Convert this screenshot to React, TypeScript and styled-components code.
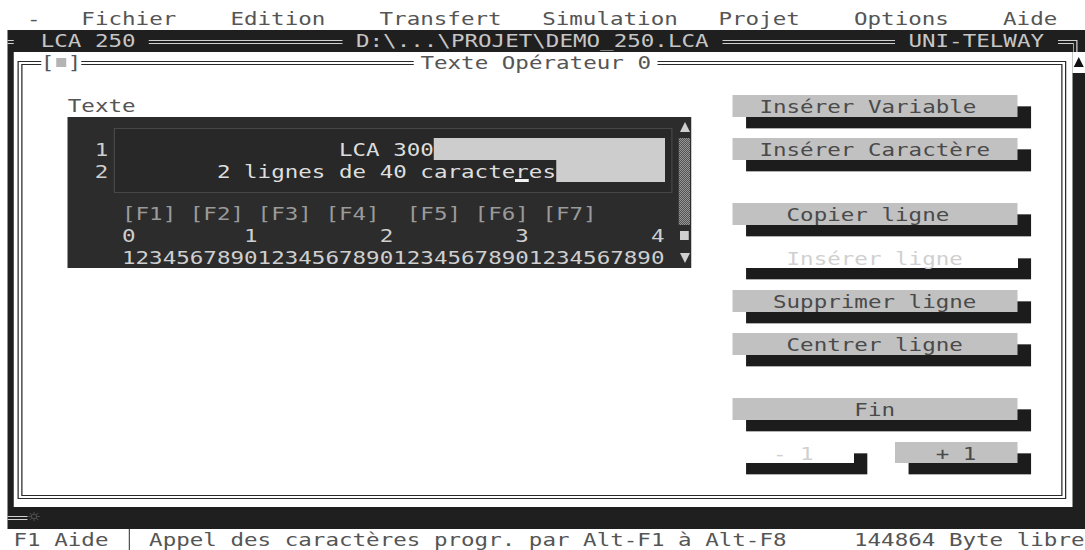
import React from "react";
import styled, { createGlobalStyle } from "styled-components";

// The screen is an 80x25 text grid. Cells are laid out unstretched
// (10.85px wide) and the whole screen is stretched 1.25x horizontally,
// which gives the wide EGA look of the font.
const SX = 1.25;
const C = 10.85; // column width before stretch
const R = 21.68; // row height
const px = (n: number) => `${n / SX}px`; // screen pixels -> unstretched

const INK = "#555";
const FRAME = "#1f1f1f";
const LIGHT = "#c6c6c6";
const RULE = "#d0d0d0";
const FACE = "#c1c1c1";
const EDIT_BG = "#2c2c2c";

const GlobalStyle = createGlobalStyle`
  html, body { margin: 0; padding: 0; background: #fff; overflow: hidden; }
  body { width: 1085px; height: 550px; }
`;

const Screen = styled.div`
  width: ${80 * C}px;
  height: 550px;
  box-sizing: border-box;
  padding-top: 8.3px;
  transform: scaleX(${SX});
  transform-origin: 0 0;
  font-family: "DejaVu Sans Mono", "Liberation Mono", monospace;
  font-size: 18px;
  line-height: ${R}px;
  letter-spacing: 0.013px;
  white-space: pre;
  color: ${INK};
  background: #fff;
`;

/* ---------- menu & status lines ---------- */

const MenuBar = styled.div`
  height: ${R}px;
  display: grid;
  grid-template-columns: repeat(80, ${C}px);
`;

const MenuItem = styled.span<{ $col: number }>`
  grid-column-start: ${(p) => p.$col + 1};
  grid-row: 1;
`;

const StatusBar = styled(MenuBar)``;

const StatusItem = styled(MenuItem)``;

const StatusSep = styled.span<{ $col: number }>`
  grid-column-start: ${(p) => p.$col + 1};
  grid-row: 1;
  justify-self: center;
  width: 0;
  height: ${R}px;
  border-left: 1px solid ${INK};
`;

/* ---------- application window ---------- */

const AppWindow = styled.div`
  margin-left: ${px(7)};
  background: ${FRAME};
  display: flex;
  flex-direction: column;
`;

const TitleBar = styled.div`
  height: ${R}px;
  display: flex;
  align-items: flex-start;
  color: ${LIGHT};
`;

const TitleRule = styled.div<{ $w?: number; $gap?: number; $grow?: boolean }>`
  margin-top: 10px;
  margin-left: ${(p) => px(p.$gap ?? 0)};
  height: 2px;
  border-top: 1px solid ${RULE};
  border-bottom: 1px solid ${RULE};
  ${(p) => (p.$grow ? "flex: 1;" : `width: ${px(p.$w ?? 0)}; flex: none;`)}
`;

const TitleLabel = styled.span<{ $gap: number }>`
  margin-left: ${(p) => px(p.$gap)};
`;

const TitleCorner = styled.div`
  margin: 10px ${px(7)} 0 ${px(14)};
  width: ${px(20)};
  align-self: stretch;
  box-sizing: border-box;
  border-top: 4px double ${RULE};
  border-right: 4px double ${RULE};
`;

const WindowBody = styled.div`
  height: ${21 * R}px;
  display: flex;
`;

const FrameEdge = styled.div`
  width: ${px(7)};
`;

const Client = styled.div`
  flex: 1;
  background: #fff;
  display: flex;
  flex-direction: column;
`;

const ScrollTrack = styled.div`
  width: ${px(13)};
  display: flex;
  flex-direction: column;
`;

const ScrollUp = styled.div`
  height: 21px;
  background: #fff;
  display: flex;
  align-items: center;
  justify-content: center;
`;

const UpArrow = styled.div<{ $color: string }>`
  width: 0;
  height: 0;
  border-left: ${px(5)} solid transparent;
  border-right: ${px(5)} solid transparent;
  border-bottom: 10px solid ${(p) => p.$color};
`;

const DownArrow = styled.div<{ $color: string }>`
  width: 0;
  height: 0;
  border-left: ${px(5)} solid transparent;
  border-right: ${px(5)} solid transparent;
  border-top: 10px solid ${(p) => p.$color};
`;

const FrameFoot = styled.div`
  height: ${R}px;
  display: flex;
  align-items: center;
`;

const FootRule = styled.div`
  width: ${px(20)};
  height: 2px;
  margin-top: 1px;
  border-top: 1px solid ${RULE};
  border-bottom: 1px solid ${RULE};
`;

const Grip = styled.svg`
  width: ${px(13)};
  height: 13px;
  margin-top: -3px;
`;

/* ---------- dialog ---------- */

const Dialog = styled.div`
  flex: 1;
  margin: 9.8px ${px(6)} 7.5px ${px(3)};
  border: 4px double #2a2a2a;
  display: flex;
  flex-direction: column;
`;

const DialogHead = styled.div`
  margin-top: -13.84px;
  height: ${R}px;
  display: flex;
`;

const CloseBox = styled.div`
  margin-left: ${px(18.7)};
  width: ${3 * C}px;
  background: #fff;
  display: flex;
  align-items: center;
`;

const CloseMark = styled.span`
  width: ${C}px;
  display: flex;
  justify-content: center;
  &::before {
    content: "";
    width: ${px(10)};
    height: 9px;
    background: #b4b4b4;
  }
`;

const DialogTitle = styled.div`
  margin-left: ${px(332.3)};
  padding: 0 ${C / 2}px;
  background: #fff;
`;

const DialogBody = styled.div`
  flex: 1;
  display: flex;
  padding-left: ${px(45.8)};
`;

const LeftPane = styled.div`
  width: ${46 * C}px;
  padding-top: ${R}px;
  display: flex;
  flex-direction: column;
`;

const FieldLabel = styled.div`
  height: ${R}px;
`;

/* text editor: cols 5-6 margin, 7 line numbers, 8 gap, 9-48 text, 49 gap, 50 scrollbar */
const Editor = styled.div`
  height: ${7 * R}px;
  background: ${EDIT_BG};
  display: grid;
  grid-template-columns: ${2 * C}px ${C}px ${C}px ${40 * C}px ${C}px ${C}px;
  grid-template-rows: repeat(7, ${R}px);
  color: #cfcfcf;
`;

const FieldBox = styled.div`
  grid-column: 3 / 6;
  grid-row: 1 / 5;
  margin: 11.3px ${px(5)} 10.4px ${px(5.5)};
  border: 1px solid #474747;
  background: #282828;
`;

const LineNo = styled.div<{ $row: number }>`
  grid-column: 2;
  grid-row: ${(p) => p.$row};
  padding-top: 1px;
`;

const TextLine = styled.div<{ $row: number }>`
  grid-column: 4;
  grid-row: ${(p) => p.$row};
  display: flex;
  color: #dedede;
  padding-top: 1px;
`;

const LineFill = styled.span`
  flex: 1;
  background: #cdcdcd;
  margin-top: -1px;
`;

const Cursor = styled.span`
  display: inline-block;
  height: ${R}px;
  background: linear-gradient(
    to top,
    transparent 1px,
    #f2f2f2 1px,
    #f2f2f2 4px,
    transparent 4px
  );
`;

const KeyRow = styled.div<{ $row: number; $dim?: boolean }>`
  grid-column: 4;
  grid-row: ${(p) => p.$row};
  color: ${(p) => (p.$dim ? "#9a9a9a" : "#cfcfcf")};
`;

const EditScroll = styled.div`
  grid-column: 6;
  grid-row: 1 / 8;
  display: flex;
  flex-direction: column;
`;

const ScrollCell = styled.div`
  height: ${R}px;
  display: flex;
  align-items: center;
  justify-content: center;
`;

const Hatch = styled.div`
  height: ${4 * R}px;
  margin: 0 ${px(1)};
  background-image: repeating-conic-gradient(#bdbdbd 0 25%, ${EDIT_BG} 0 50%);
  background-size: ${px(2)} 2px;
`;

const Thumb = styled.div`
  width: ${px(9)};
  height: 9px;
  background: #d0d0d0;
`;

/* ---------- buttons ---------- */

const RightPane = styled.div`
  margin-left: ${3 * C}px;
  width: ${22 * C}px;
  padding-top: ${R}px;
  display: flex;
  flex-direction: column;
`;

const ButtonRow = styled.div<{ $skip: number }>`
  margin-top: ${(p) => p.$skip * R}px;
  display: flex;
  gap: ${3 * C}px;
`;

const Button = styled.div<{ $w: number; $pad: number; $off?: boolean }>`
  width: ${(p) => p.$w * C}px;
  height: ${R}px;
  box-sizing: border-box;
  padding-left: ${(p) => p.$pad * C}px;
  padding-top: 1px;
  background: ${(p) => (p.$off ? "transparent" : FACE)};
  color: ${(p) => (p.$off ? "#d0d0d0" : "#4a4a4a")};
  box-shadow: ${C}px ${R / 2 + 0.5}px 0 0 #1c1c1c;
`;

const BUTTONS = [
  { label: "Insérer Variable", pad: 2, skip: 0 },
  { label: "Insérer Caractère", pad: 2, skip: 1 },
  { label: "Copier ligne", pad: 4, skip: 2 },
  { label: "Insérer ligne", pad: 4, skip: 1, off: true },
  { label: "Supprimer ligne", pad: 3, skip: 1 },
  { label: "Centrer ligne", pad: 4, skip: 1 },
  { label: "Fin", pad: 9, skip: 2 },
];

const FKEYS = "[F1] [F2] [F3] [F4]  [F5] [F6] [F7]";
const DECADES = "0        1         2         3         4";
const RULER = "1234567890".repeat(4);

export default function App() {
  return (
    <>
      <GlobalStyle />
      <Screen>
        <MenuBar>
          <MenuItem $col={2}>-</MenuItem>
          <MenuItem $col={6}>Fichier</MenuItem>
          <MenuItem $col={17}>Edition</MenuItem>
          <MenuItem $col={28}>Transfert</MenuItem>
          <MenuItem $col={40}>Simulation</MenuItem>
          <MenuItem $col={53}>Projet</MenuItem>
          <MenuItem $col={63}>Options</MenuItem>
          <MenuItem $col={74}>Aide</MenuItem>
        </MenuBar>

        <AppWindow>
          <TitleBar>
            <TitleRule $w={7} />
            <TitleLabel $gap={26.7}>LCA 250</TitleLabel>
            <TitleRule $gap={13.4} $w={194} />
            <TitleLabel $gap={13}>D:\...\PROJET\DEMO_250.LCA</TitleLabel>
            <TitleRule $gap={13.4} $grow />
            <TitleLabel $gap={13.7}>UNI-TELWAY</TitleLabel>
            <TitleCorner />
          </TitleBar>

          <WindowBody>
            <FrameEdge />
            <Client>
              <Dialog>
                <DialogHead>
                  <CloseBox>
                    [<CloseMark />]
                  </CloseBox>
                  <DialogTitle>Texte Opérateur 0</DialogTitle>
                </DialogHead>

                <DialogBody>
                  <LeftPane>
                    <FieldLabel>Texte</FieldLabel>
                    <Editor>
                      <FieldBox />
                      <LineNo $row={2}>1</LineNo>
                      <LineNo $row={3}>2</LineNo>
                      <TextLine $row={2}>
                        <span>{"                LCA 300"}</span>
                        <LineFill />
                      </TextLine>
                      <TextLine $row={3}>
                        <span>
                          {"       2 lignes de 40 caracte"}
                          <Cursor>r</Cursor>
                          {"es"}
                        </span>
                        <LineFill />
                      </TextLine>
                      <KeyRow $row={5} $dim>
                        {FKEYS}
                      </KeyRow>
                      <KeyRow $row={6}>{DECADES}</KeyRow>
                      <KeyRow $row={7}>{RULER}</KeyRow>
                      <EditScroll>
                        <ScrollCell>
                          <UpArrow $color="#cfcfcf" />
                        </ScrollCell>
                        <Hatch />
                        <ScrollCell>
                          <Thumb />
                        </ScrollCell>
                        <ScrollCell>
                          <DownArrow $color="#cfcfcf" />
                        </ScrollCell>
                      </EditScroll>
                    </Editor>
                  </LeftPane>

                  <RightPane>
                    {BUTTONS.map((b) => (
                      <ButtonRow key={b.label} $skip={b.skip}>
                        <Button $w={21} $pad={b.pad} $off={b.off}>
                          {b.label}
                        </Button>
                      </ButtonRow>
                    ))}
                    <ButtonRow $skip={1}>
                      <Button $w={9} $pad={3} $off>
                        - 1
                      </Button>
                      <Button $w={9} $pad={3}>
                        + 1
                      </Button>
                    </ButtonRow>
                  </RightPane>
                </DialogBody>
              </Dialog>
            </Client>
            <ScrollTrack>
              <ScrollUp>
                <UpArrow $color="#111" />
              </ScrollUp>
            </ScrollTrack>
          </WindowBody>

          <FrameFoot>
            <FootRule />
            <Grip viewBox="0 0 12 12">
              <circle cx="6" cy="6" r="2.5" fill="none" stroke="#4c4c4c" strokeWidth="1.2" />
              <path
                d="M6 0.5v2.5M6 9v2.5M0.5 6h2.5M9 6h2.5M2 2l1.7 1.7M8.3 8.3L10 10M10 2L8.3 3.7M3.7 8.3L2 10"
                stroke="#4c4c4c"
                strokeWidth="1"
              />
            </Grip>
          </FrameFoot>
        </AppWindow>

        <StatusBar>
          <StatusItem $col={1}>F1 Aide</StatusItem>
          <StatusSep $col={9} />
          <StatusItem $col={11}>Appel des caractères progr. par Alt-F1 à Alt-F8</StatusItem>
          <StatusItem $col={63}>144864 Byte libre</StatusItem>
        </StatusBar>
      </Screen>
    </>
  );
}
